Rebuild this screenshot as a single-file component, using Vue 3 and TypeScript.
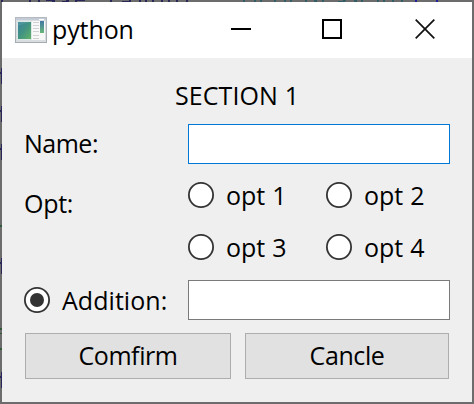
<script setup lang="ts">
import { ref } from 'vue'

interface Mark { x: number; y: number; w: number; h: number; c: string }

const name = ref('')
const addition = ref('')
const options: string[] = ['opt 1', 'opt 2', 'opt 3', 'opt 4']

// Slivers of the editor window showing around the dialog
const marks: Mark[] = [
  { x: 1, y: 0, w: 2, h: 2, c: '#29265a' },
  { x: 29, y: 0, w: 2, h: 2, c: '#29265a' },
  { x: 38, y: 0, w: 2, h: 2, c: '#29265a' },
  { x: 46, y: 0, w: 8, h: 1, c: '#29265a' },
  { x: 52, y: 0, w: 3, h: 2, c: '#29265a' },
  { x: 62, y: 1, w: 7, h: 1, c: '#29265a' },
  { x: 66, y: 0, w: 3, h: 1, c: '#29265a' },
  { x: 75, y: 0, w: 2, h: 2, c: '#29265a' },
  { x: 76, y: 0, w: 9, h: 1, c: '#29265a' },
  { x: 110, y: 0, w: 2, h: 2, c: '#29265a' },
  { x: 122, y: 1, w: 8, h: 1, c: '#29265a' },
  { x: 129, y: 0, w: 2, h: 2, c: '#29265a' },
  { x: 139, y: 0, w: 2, h: 2, c: '#29265a' },
  { x: 145, y: 0, w: 2, h: 2, c: '#29265a' },
  { x: 152, y: 0, w: 2, h: 2, c: '#29265a' },
  { x: 161, y: 0, w: 2, h: 2, c: '#29265a' },
  { x: 168, y: 0, w: 2, h: 2, c: '#29265a' },
  { x: 176, y: 0, w: 2, h: 2, c: '#29265a' },
  { x: 186, y: 0, w: 2, h: 2, c: '#29265a' },
  { x: 243, y: 0, w: 2, h: 2, c: '#315d67' },
  { x: 254, y: 0, w: 2, h: 2, c: '#315d67' },
  { x: 260, y: 0, w: 2, h: 2, c: '#315d67' },
  { x: 274, y: 0, w: 2, h: 2, c: '#315d67' },
  { x: 284, y: 0, w: 2, h: 2, c: '#315d67' },
  { x: 290, y: 0, w: 2, h: 2, c: '#315d67' },
  { x: 305, y: 0, w: 2, h: 2, c: '#315d67' },
  { x: 314, y: 0, w: 3, h: 2, c: '#315d67' },
  { x: 322, y: 0, w: 2, h: 2, c: '#315d67' },
  { x: 338, y: 1, w: 7, h: 1, c: '#315d67' },
  { x: 343, y: 0, w: 3, h: 1, c: '#315d67' },
  { x: 354, y: 0, w: 3, h: 2, c: '#315d67' },
  { x: 361, y: 0, w: 2, h: 2, c: '#315d67' },
  { x: 377, y: 0, w: 2, h: 2, c: '#315d67' },
  { x: 383, y: 0, w: 2, h: 2, c: '#315d67' },
  { x: 392, y: 0, w: 2, h: 2, c: '#315d67' },
  { x: 401, y: 0, w: 2, h: 2, c: '#315d67' },
  { x: 415, y: 0, w: 2, h: 2, c: '#20209a' },
  { x: 436, y: 0, w: 2, h: 2, c: '#20209a' },
  { x: 1, y: 68, w: 1, h: 16, c: '#29265a' },
  { x: 0, y: 72, w: 2, h: 2, c: '#29265a' },
  { x: 1, y: 106, w: 1, h: 16, c: '#29265a' },
  { x: 0, y: 110, w: 2, h: 2, c: '#29265a' },
  { x: 1, y: 144, w: 1, h: 16, c: '#29265a' },
  { x: 0, y: 148, w: 2, h: 2, c: '#29265a' },
  { x: 0, y: 225, w: 2, h: 2, c: '#315939' },
  { x: 1, y: 258, w: 1, h: 16, c: '#29265a' },
  { x: 0, y: 262, w: 2, h: 2, c: '#29265a' },
  { x: 0, y: 328, w: 2, h: 2, c: '#315939' },
  { x: 0, y: 333, w: 2, h: 1, c: '#315939' },
  { x: 0, y: 348, w: 2, h: 2, c: '#315939' },
  { x: 1, y: 372, w: 1, h: 16, c: '#29265a' },
  { x: 0, y: 376, w: 2, h: 2, c: '#29265a' },
]
</script>

<template>
  <div class="desktop">
    <svg class="backdrop" width="474" height="404" shape-rendering="crispEdges">
      <rect v-for="(m, i) in marks" :key="i" :x="m.x" :y="m.y" :width="m.w" :height="m.h" :fill="m.c" />
    </svg>
    <main class="window">
      <header class="titlebar">
        <svg class="app-icon" width="32" height="26" viewBox="0 0 32 26">
          <defs>
            <linearGradient id="frame" x2="0" y2="1"><stop stop-color="#b4bac0" /><stop offset="1" stop-color="#a4abb1" /></linearGradient>
            <linearGradient id="pane" x2="1" y2="1"><stop stop-color="#397fa0" /><stop offset=".5" stop-color="#439481" /><stop offset="1" stop-color="#64b467" /></linearGradient>
            <linearGradient id="mini" x2="0" y2="1"><stop stop-color="#4278a6" /><stop offset="1" stop-color="#68b778" /></linearGradient>
          </defs>
          <rect x=".5" y=".5" width="31" height="25" fill="#d9dde0" stroke="url(#frame)" />
          <path d="M1 2h30" stroke="#c3ccd6" stroke-width="2" />
          <path d="M24 2.500h5" stroke="#fff" />
          <path d="M2 4h28v19H2z" fill="#f8f8f8" />
          <path d="M2.500 4.500h14v18h-14z" fill="url(#pane)" stroke="#dce8e6" />
          <path d="M3 9Q10 6 16 5H3z" fill="#68a9aa" opacity=".4" />
          <path d="M18 5.500h6M18 8.500h6M18 11.500h6M18 14.500h6M18 18.500h6M18 21.500h6" stroke="#ced2d4" />
          <path d="M25 4h4v12h-4z" fill="url(#mini)" />
        </svg>
        <span class="title">python</span>
        <div class="controls">
          <svg width="20" height="20"><path d="M0 10h20" stroke="#000" stroke-width="2" /></svg>
          <svg width="20" height="20"><rect x="1" y="1" width="18" height="18" fill="none" stroke="#000" stroke-width="2" /></svg>
          <svg class="close" width="20" height="20"><path d="M.7 .7l18.600 18.600M19.300 .7L.7 19.300" stroke="#111" stroke-width="1.700" /></svg>
        </div>
      </header>
      <form class="form" @submit.prevent>
        <h1 class="heading">SECTION 1</h1>
        <div class="row">
          <label class="label name" for="name">Name:</label>
          <input id="name" v-model="name" class="field active" type="text" />
        </div>
        <div class="row opts">
          <span class="label opt">Opt:</span>
          <div class="options">
            <label v-for="o in options" :key="o" class="choice">
              <svg width="26" height="26"><circle cx="13" cy="13" r="12.100" fill="#fff" stroke="#333" stroke-width="1.800" /></svg>
              <span class="choice-text">{{ o }}</span>
            </label>
          </div>
        </div>
        <div class="row">
          <label class="choice label extra" for="addition">
            <svg width="26" height="26"><circle cx="13" cy="13" r="12.100" fill="#fff" stroke="#333" stroke-width="1.800" /><circle cx="13" cy="13" r="7" fill="#333" /></svg>
            <span>Addition:</span>
          </label>
          <input id="addition" v-model="addition" class="field" type="text" />
        </div>
        <footer class="buttons">
          <button type="button">Comfirm</button>
          <button type="button">Cancle</button>
        </footer>
      </form>
    </main>
  </div>
</template>

<style>
body { margin: 0; overflow: hidden; }
</style>
<style scoped>
* { box-sizing: border-box; }
.desktop { position: relative; width: 474px; height: 404px; padding: 2px; background: #6c6c6c; font: 25px/34px "Open Sans", "Noto Sans", sans-serif; color: #000; }
.backdrop { position: absolute; inset: 0; }
.window { position: relative; width: 470px; height: 400px; background: #efefef; }
.titlebar { display: flex; align-items: center; height: 56px; padding: 0 37px 0 13px; background: #fff; }
.app-icon { margin-right: 5px; }
.title { padding-bottom: 3px; letter-spacing: -.1px; }
.controls { display: flex; gap: 71px; margin-left: auto; padding-bottom: 2px; }
.close { margin-left: 2px; }
svg { display: block; flex: none; }
.form { padding: 20px 22px 0; }
.heading { margin: 0 0 12px; height: 34px; font-size: 25px; font-weight: 400; line-height: 34px; text-align: center; letter-spacing: .1px; }
.row { display: flex; align-items: center; height: 40px; }
.label { width: 164px; flex: none; letter-spacing: -.5px; }
.name { padding-bottom: 2px; }
.field { width: 262px; height: 40px; margin: 0; padding: 0 8px; border: 1px solid #7a7a7a; border-radius: 0; outline: 0; background: #fff; font: inherit; }
.active { border-color: #0078d7; }
.opts { height: 116px; align-items: flex-start; padding-top: 18px; }
.opt { padding-top: 4px; letter-spacing: -.3px; }
.options { display: grid; grid-template-columns: 138px 124px; row-gap: 26px; }
.choice { display: flex; align-items: center; gap: 12px; height: 26px; letter-spacing: 0; }
.choice-text { word-spacing: .5px; }
.extra { padding-bottom: 0; letter-spacing: .05px; }
.buttons { display: flex; gap: 14px; padding: 13px 1px 0; }
button { width: 206px; height: 46px; padding: 0 0 2px; border: 1px solid #adadad; border-radius: 0; background: #e1e1e1; color: #000; font: inherit; letter-spacing: -.4px; }
button:last-child { width: 204px; }
</style>
